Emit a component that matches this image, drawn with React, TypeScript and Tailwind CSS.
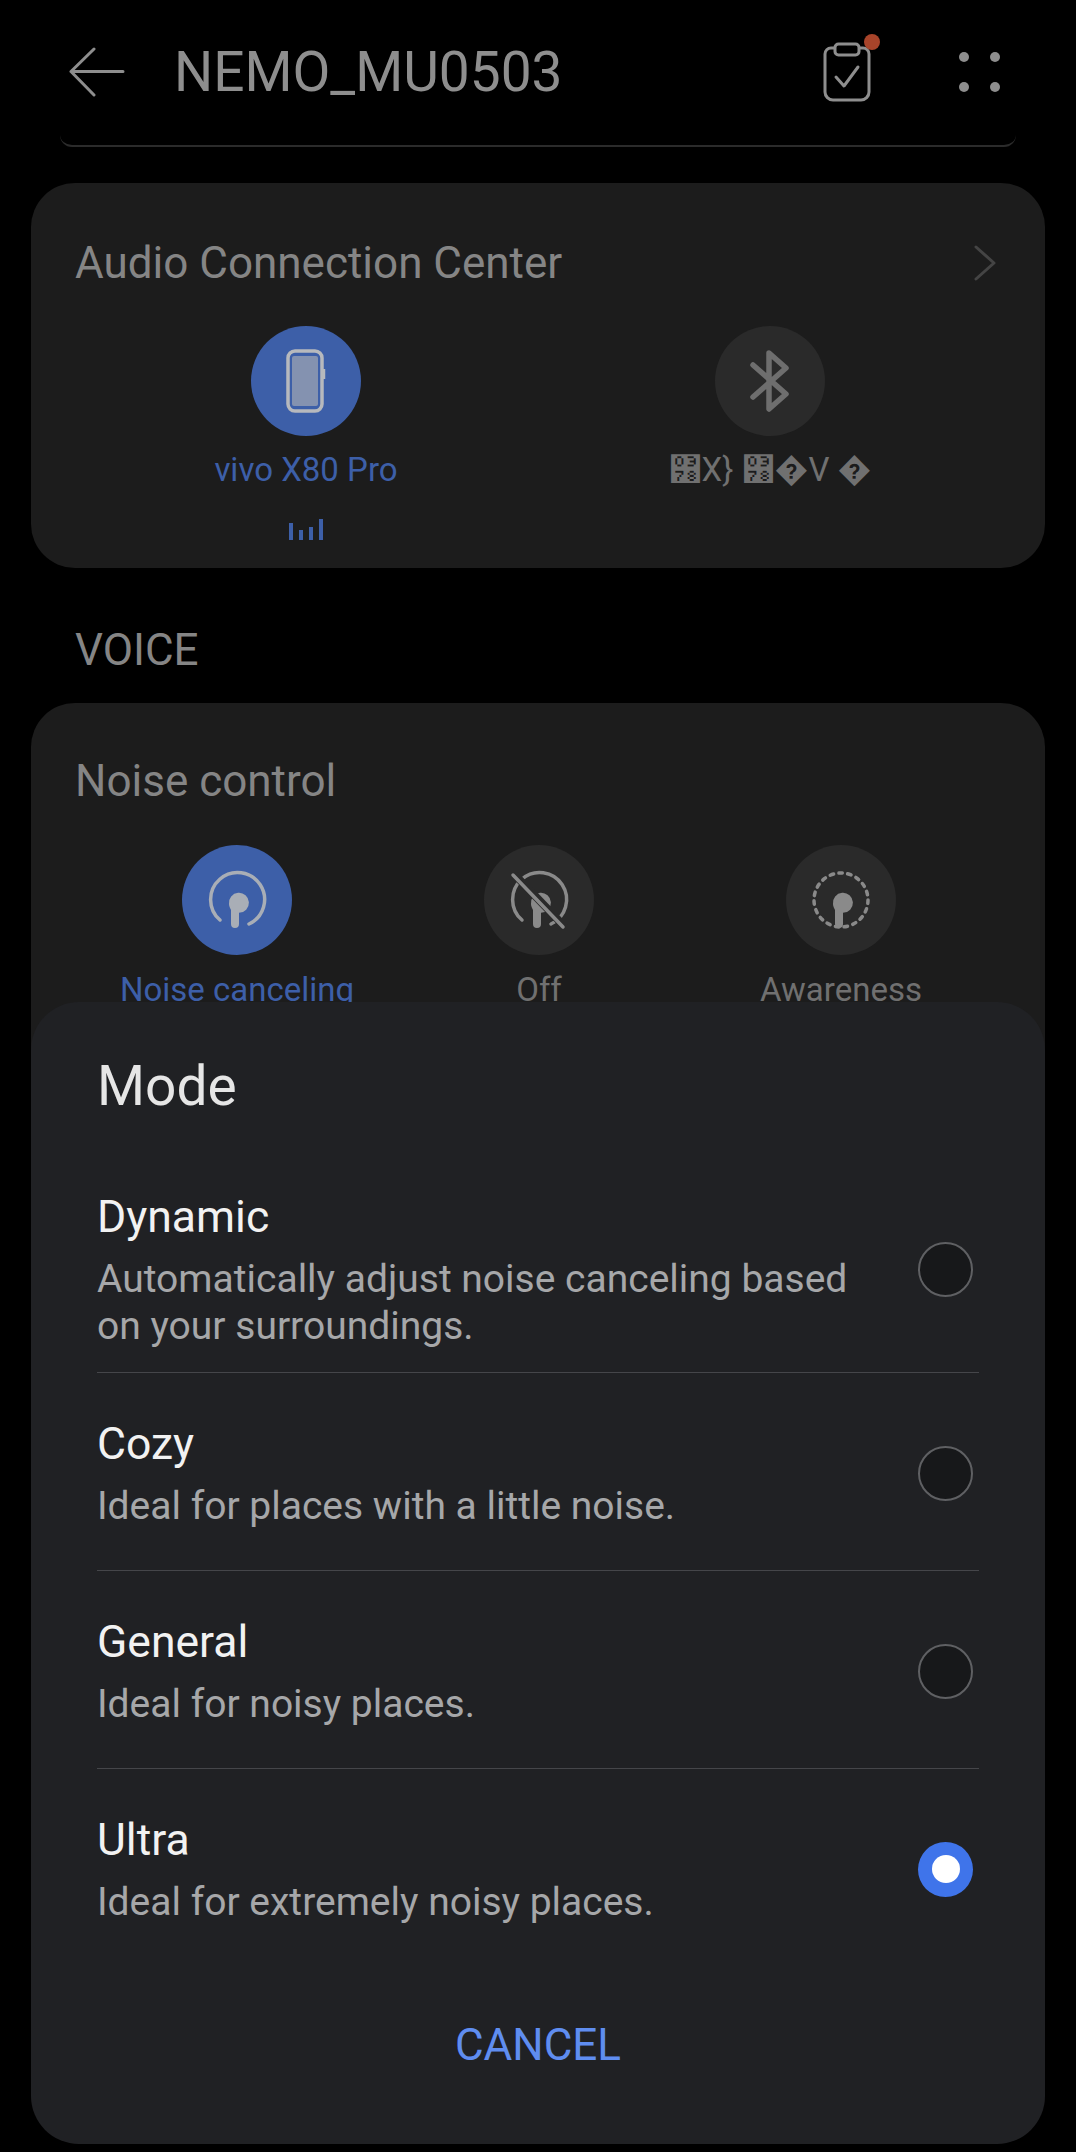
import React from 'react';

const modes = [
  { name: 'Dynamic', lines: ['Automatically adjust noise canceling based', 'on your surroundings.'] },
  { name: 'Cozy', lines: ['Ideal for places with a little noise.'] },
  { name: 'General', lines: ['Ideal for noisy places.'] },
  { name: 'Ultra', lines: ['Ideal for extremely noisy places.'], selected: true },
];

function BudIcon({ kind, color }: { kind: 'cancel' | 'off' | 'aware'; color: string }) {
  return (
    <svg width="64" height="64" viewBox="0 0 64 64" fill="none">
      {kind === 'aware' ? (
        <circle cx="32" cy="32" r="27" stroke={color} strokeWidth="3.5" strokeDasharray="3.5 5.4" strokeLinecap="round" />
      ) : (
        <path d="M15 52 A27 27 0 1 1 44 56" stroke={color} strokeWidth="3.5" strokeLinecap="round" />
      )}
      <path d="M24 36 A10 10 0 1 1 34 44.8 V56 A4 4 0 0 1 26 56 V42 C25 40 24 38 24 36Z" fill={color} />
      {kind === 'off' && <path d="M8 7 L58 59" stroke="#2a2a2a" strokeWidth="8" />}
      {kind === 'off' && <path d="M6 7 L56 59" stroke={color} strokeWidth="3.5" strokeLinecap="round" />}
    </svg>
  );
}

function Option({ label, active, kind }: { label: string; active?: boolean; kind: 'cancel' | 'off' | 'aware' }) {
  return (
    <div className="flex flex-col items-center w-[302px]">
      <div className={`w-[110px] h-[110px] rounded-full flex items-center justify-center ${active ? 'bg-[#3d5fa8]' : 'bg-[#2a2a2a]'}`}>
        <BudIcon kind={kind} color={active ? '#a9aeb6' : '#8a8a8a'} />
      </div>
      <div className={`mt-[13px] text-[33px] leading-[44px] whitespace-nowrap ${active ? 'text-[#3d5fa8]' : 'text-[#707070]'}`}>{label}</div>
    </div>
  );
}

export default function App() {
  return (
    <div className="relative h-[2152px] w-[1076px] overflow-hidden bg-black font-['Roboto',sans-serif]">
      {/* Top bar */}
      <header className="h-[147px] mx-[60px] border-b-2 border-[#2b2b2b] rounded-b-[12px] flex items-center pb-[2px]">
        <svg width="56" height="50" viewBox="0 0 56 50" fill="none" className="ml-[9px]" stroke="#8e8e8e" strokeWidth="3" strokeLinecap="round" strokeLinejoin="round">
          <path d="M25 2 L2 24.5 L25 48 M2 24.5 H54" />
        </svg>
        <h1 className="ml-[49px] text-[55px] leading-[60px] text-[#8e8e8e]">NEMO_MU0503</h1>
        <div className="ml-auto flex items-center">
          <div className="relative w-[50px] h-[60px]">
            <svg width="50" height="60" viewBox="0 0 50 60" fill="none" stroke="#8e8e8e" strokeWidth="3" strokeLinecap="round" strokeLinejoin="round">
              <path d="M12 6 H9 A6 6 0 0 0 3 12 V50 A8 8 0 0 0 11 58 H39 A8 8 0 0 0 47 50 V12 A6 6 0 0 0 41 6 H38" />
              <rect x="13" y="2" width="24" height="11" rx="3.5" />
              <path d="M14 35 L22 44 L36 25" />
            </svg>
            <span className="absolute right-[-8px] top-[-8px] w-[16px] h-[16px] rounded-full bg-[#a8442a]" />
          </div>
          <div className="ml-[87px] mr-[16px] grid grid-cols-2 gap-x-[21px] gap-y-[20px]">
            <span className="w-[10px] h-[10px] rounded-full bg-[#8e8e8e]" />
            <span className="w-[10px] h-[10px] rounded-full bg-[#8e8e8e]" />
            <span className="w-[10px] h-[10px] rounded-full bg-[#8e8e8e]" />
            <span className="w-[10px] h-[10px] rounded-full bg-[#8e8e8e]" />
          </div>
        </div>
      </header>

      {/* Audio Connection Center */}
      <section className="mt-[36px] mx-[31px] h-[385px] rounded-[44px] bg-[#1c1c1c] pt-[55px] px-[44px]">
        <div className="flex items-center justify-between">
          <h2 className="text-[44px] leading-[50px] text-[#858585]">Audio Connection Center</h2>
          <svg width="22" height="36" viewBox="0 0 22 36" fill="none" className="mr-[5px]" stroke="#444444" strokeWidth="3" strokeLinecap="round" strokeLinejoin="round">
            <path d="M2 2 L20 18 L2 34" />
          </svg>
        </div>
        <div className="mt-[38px] flex">
          <div className="flex flex-col items-center w-[374px] ml-[44px]">
            <div className="w-[110px] h-[110px] rounded-full bg-[#3d5fa8] flex items-center justify-center">
              <svg width="40" height="66" viewBox="0 0 40 66" fill="none">
                <rect x="2" y="3" width="34" height="60" rx="7" stroke="#b7b9bd" strokeWidth="3.5" />
                <rect x="6" y="8" width="26" height="50" rx="2" fill="#8492b0" />
                <path d="M38 21 V31" stroke="#b7b9bd" strokeWidth="2.5" />
              </svg>
            </div>
            <div className="mt-[12px] text-[33px] leading-[44px] text-[#3d5fa8] whitespace-nowrap">vivo X80 Pro</div>
            <svg width="36" height="21" viewBox="0 0 36 21" fill="#3d5fa8" className="mt-[27px]">
              <rect x="1" y="4" width="4" height="17" />
              <rect x="11" y="11" width="4" height="10" />
              <rect x="21" y="8" width="4" height="13" />
              <rect x="31" y="0" width="4" height="21" />
            </svg>
          </div>
          <div className="flex flex-col items-center w-[340px] ml-[107px]">
            <div className="w-[110px] h-[110px] rounded-full bg-[#2a2a2a] flex items-center justify-center">
              <svg width="40" height="62" viewBox="0 0 40 62" fill="none" stroke="#6e6e6e" strokeWidth="5.5" strokeLinecap="round" strokeLinejoin="round">
                <path d="M3 15 L36 44 L19 59 V3 L36 18 L3 47" />
              </svg>
            </div>
            <div className="mt-[12px] text-[33px] leading-[44px] text-[#707070] whitespace-nowrap font-['Roboto','DejaVu_Sans',sans-serif]">{'\u0378X} \u0378\uFFFDV \uFFFD'}</div>
          </div>
        </div>
      </section>

      <h3 className="mt-[57px] ml-[75px] text-[44px] leading-[50px] text-[#858585]">VOICE</h3>

      {/* Noise control, runs on below the sheet */}
      <section className="mt-[28px] mx-[31px] h-[600px] rounded-[44px] bg-[#1c1c1c] pt-[53px] px-[44px]">
        <h2 className="text-[44px] leading-[50px] text-[#858585]">Noise control</h2>
        <div className="mt-[39px] flex ml-[11px]">
          <Option label="Noise canceling" active kind="cancel" />
          <Option label="Off" kind="off" />
          <Option label="Awareness" kind="aware" />
        </div>
      </section>

      {/* Mode sheet */}
      <div className="absolute left-[31px] top-[1002px] w-[1014px] h-[1142px] rounded-[48px] bg-[#202124] px-[66px] pt-[54px]">
        <h2 className="text-[55px] leading-[60px] text-[#e6e6e6]">Mode</h2>
        <div className="mt-[73px]">
          {modes.map((m, i) => (
            <div
              key={m.name}
              className={`flex items-center justify-between ${i > 0 ? 'pt-[43px]' : ''} ${i < 3 ? 'border-b border-[#45464a]' : ''} ${i === 0 ? 'pb-[22px]' : i < 3 ? 'pb-[40px]' : ''}`}
            >
              <div>
                <div className="text-[44.5px] leading-[56px] mb-[11px] text-[#f2f2f2]">{m.name}</div>
                {m.lines.map(l => (
                  <div key={l} className="text-[39px] leading-[47px] text-[#a6a7a9] whitespace-nowrap">{l}</div>
                ))}
              </div>
              {m.selected ? (
                <span className="mr-[6px] w-[55px] h-[55px] rounded-full bg-[#3f74ea] flex items-center justify-center">
                  <span className="w-[28px] h-[28px] rounded-full bg-white" />
                </span>
              ) : (
                <span className="mr-[6px] w-[55px] h-[55px] rounded-full bg-[#17181a] border-[2.5px] border-[#5f6063]" />
              )}
            </div>
          ))}
        </div>
        <div className="mt-[91px] text-center text-[44px] leading-[56px] text-[#5f8df0]">CANCEL</div>
      </div>
    </div>
  );
}
